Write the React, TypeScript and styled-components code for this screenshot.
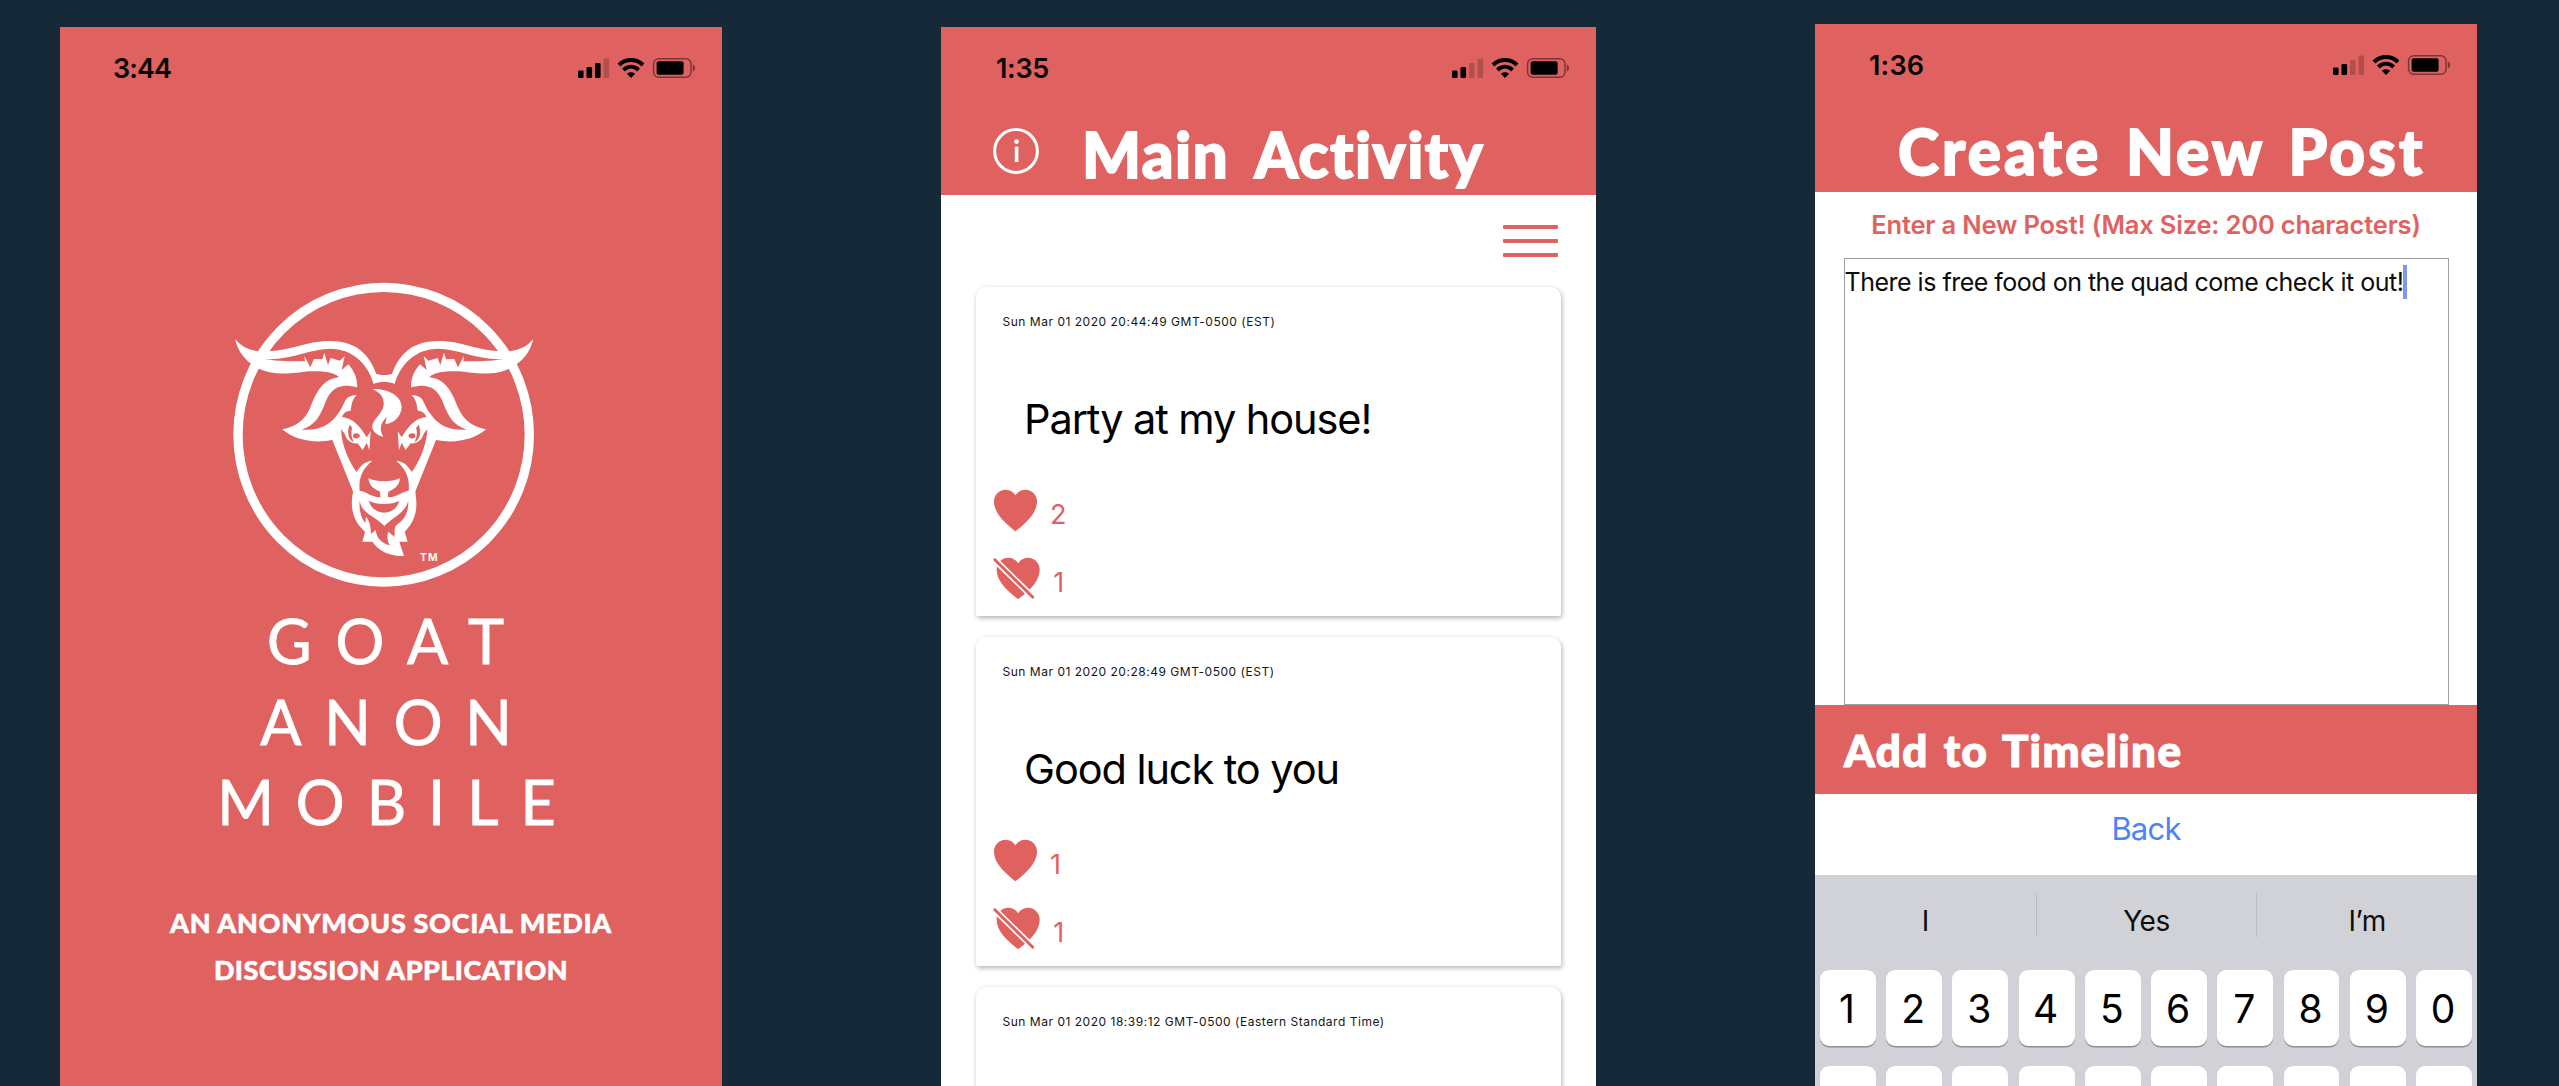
import React from "react";
import styled, { createGlobalStyle } from "styled-components";
import { IoIosHeart, IoIosHeartDislike } from "react-icons/io";

const RED = "#df6260";
const NAVY = "#152939";
const UI = '"Inter", "Liberation Sans", sans-serif';
const DISPLAY = '"Lato", "Open Sans", sans-serif';

const GlobalStyle = createGlobalStyle`
  html, body { margin: 0; padding: 0; background: ${NAVY}; overflow: hidden; }
  * { box-sizing: border-box; }
`;

const Stage = styled.main`
  display: flex;
  align-items: flex-start;
  width: 2559px;
  height: 1086px;
  padding-left: 60px;
  overflow: hidden;
  background: ${NAVY};
  font-family: ${UI};
`;

const Phone = styled.section<{ $width: number; $top: number; $gap?: number; $fill?: string }>`
  flex: none;
  display: flex;
  flex-direction: column;
  width: ${(p) => p.$width}px;
  height: ${(p) => 1086 - p.$top}px;
  margin-top: ${(p) => p.$top}px;
  margin-left: ${(p) => p.$gap ?? 0}px;
  background: ${(p) => p.$fill ?? "#fff"};
  overflow: hidden;
`;

/* ---------- status bar ---------- */

const StatusRow = styled.div<{ $inset: number }>`
  flex: none;
  display: flex;
  align-items: center;
  justify-content: space-between;
  height: 82px;
  padding: 0 26px 0 ${(p) => p.$inset}px;
`;

const Clock = styled.time<{ $tracking: number }>`
  padding-top: 1px;
  font: 600 27px/32px ${UI};
  letter-spacing: ${(p) => p.$tracking}px;
  color: #0a0505;
`;

function StatusBar({ time, bars, inset, tracking = 0 }: { time: string; bars: number; inset: number; tracking?: number }) {
  const heights = [7.5, 11, 15, 19.5];
  return (
    <StatusRow $inset={inset}>
      <Clock $tracking={tracking}>{time}</Clock>
      <svg width="118" height="20" viewBox="0 0 118 20">
        {heights.map((h, i) => (
          <rect key={h} x={i * 8.5} y={20 - h} width="5.6" height={h} rx="1.3" fill="#000" opacity={i < bars ? 1 : 0.2} />
        ))}
        <g fill="none" stroke="#000" strokeWidth="4">
          <path d="M41 7 C48 0.4 58 0.4 65 7" />
          <path d="M45.4 12 C50 7.8 56 7.8 60.6 12" />
        </g>
        <path d="M53 20 L48.9 15.8 C51.2 13.8 54.8 13.8 57.1 15.8 Z" />
        <rect x="75.6" y="0.8" width="37.4" height="18.4" rx="5" fill="none" stroke="#000" strokeOpacity="0.45" strokeWidth="1.5" />
        <rect x="78.6" y="3.2" width="27" height="13.6" rx="2" />
        <path d="M114.8 6.4 C117.8 7.6 117.8 12.4 114.8 13.6 Z" opacity="0.45" />
      </svg>
    </StatusRow>
  );
}

/* ---------- splash ---------- */

const Emblem = styled.svg`
  flex: none;
  width: 350px;
  height: 330px;
  margin: 161px 0 0 150px;
`;

const Wordmark = styled.h1`
  display: flex;
  flex-direction: column;
  align-items: center;
  margin: 1px 0 0;
  padding-left: 13px;
  font: 400 61px/80.5px ${DISPLAY};
  color: #fff;
  -webkit-text-stroke: 0.9px #fff;
`;

const WordLine = styled.span<{ $tracking: number }>`
  letter-spacing: ${(p) => p.$tracking}px;
`;

const Tagline = styled.p`
  display: flex;
  flex-direction: column;
  align-items: center;
  margin: 56px 0 0;
  font: 900 27px/47.7px ${DISPLAY};
  color: #fff;
  -webkit-text-stroke: 0.5px #fff;
`;

const HALF_HEAD =
  "M75 207 C95 232 120 240 147 244 C250 245 280 213 360 213 C445 213 480 260 499 312 C510 315 516 315 523 315 " +
  "L523 336 C510 336 500 338 491 342 C475 285 430 236 360 236 C300 236 240 272 165 267 C205 275 245 273 285 274 " +
  "L283 258 L301 292 L312 267 L337 268 L343 248 L354 285 L362 264 L390 272 L404 258 L395 300 L415 283 " +
  "C430 300 442 320 442 352 C395 340 365 350 347 395 C330 440 315 465 275 479 C335 483 365 460 385 430 " +
  "C410 395 400 378 440 375 C425 390 425 405 422 422 C408 422 398 432 396 441 C425 445 445 460 470 502 " +
  "L482 484 L478 540 L470 518 L458 540 L443 520 C425 522 410 512 403 490 L393 477 C395 530 420 580 440 606 " +
  "C450 590 460 575 487 572 C460 595 445 620 449 662 L430 667 L367 510 C310 522 250 508 217 478 " +
  "C255 470 282 455 300 415 C318 370 335 328 387 322 C375 305 330 302 295 304 C250 312 180 318 140 292 " +
  "C110 275 85 250 75 207 Z";

function HalfHead() {
  return (
    <>
      <path d={HALF_HEAD} fill="#fff" />
      <path d="M419 464 C410 485 414 508 432 517 C424 502 422 486 427 474 Z" fill={RED} />
      <path d="M430 492 C438 488 446 490 450 497 C447 506 436 508 429 502 Z" fill={RED} />
    </>
  );
}

function GoatEmblem() {
  return (
    <Emblem viewBox="0 0 1050 990">
      <ellipse cx="521" cy="494" rx="437" ry="442" fill="none" stroke="#fff" strokeWidth="28" />
      <HalfHead />
      <g transform="translate(1045 0) scale(-1 1)">
        <HalfHead />
      </g>
      <path
        fill="#fff"
        d="M487 357 C530 355 575 375 575 412 C573 445 545 462 527 462 C525 455 530 448 530 442 C515 455 505 475 520 500 C495 495 485 480 487 465 C495 440 525 425 521 395 C518 375 505 365 487 357 Z"
      />
      <path
        fill="#fff"
        d="M430 660 C422 700 420 745 465 785 L457 815 L487 815 C505 842 540 860 582 858 L568 815 L593 815 L584 785 C625 745 622 700 615 660 L597 662 C575 665 565 680 533 682 L512 682 C480 680 470 665 449 662 Z"
      />
      <path
        fill="#fff"
        d="M475 625 C500 637 545 637 570 625 C568 650 550 658 535 665 L533 686 L512 686 L510 665 C495 658 478 650 475 625 Z"
      />
      <path fill={RED} d="M476 692 C500 705 545 705 568 692 C555 740 490 740 476 692 Z" />
      <path
        fill={RED}
        d="M449 692 C455 730 490 735 523 768 C550 740 585 730 595 692 C595 725 588 745 560 765 C550 775 556 785 553 800 L535 785 C530 800 532 815 540 826 C515 820 500 805 497 780 L483 792 C482 770 480 755 468 740 L466 758 C452 745 447 715 449 692 Z"
      />
      <text x="630" y="874" fill="#fff" fontFamily={UI} fontWeight="700" fontSize="31" textLength="53">
        TM
      </text>
    </Emblem>
  );
}

/* ---------- headers ---------- */

const Header = styled.header`
  flex: none;
  display: flex;
  flex-direction: column;
  background: ${RED};
`;

const TitleRow = styled.div<{ $inset: number }>`
  display: flex;
  align-items: center;
  height: 86px;
  padding-left: ${(p) => p.$inset}px;
`;

const ScreenTitle = styled.h2<{ $tracking: number; $words: number }>`
  margin: 0;
  padding-top: 3px;
  font: 900 62px/74px ${DISPLAY};
  font-variant-ligatures: none;
  letter-spacing: ${(p) => p.$tracking}px;
  word-spacing: ${(p) => p.$words}px;
  white-space: nowrap;
  color: #fff;
  -webkit-text-stroke: 1.8px #fff;
`;

const InfoIcon = styled.svg`
  flex: none;
  width: 48px;
  height: 48px;
  margin: 0 42px 0 0;
`;

/* ---------- feed ---------- */

const Toolbar = styled.div`
  flex: none;
  display: flex;
  align-items: center;
  justify-content: flex-end;
  height: 92px;
  padding-right: 38px;
`;

const MenuButton = styled.button`
  display: flex;
  flex-direction: column;
  gap: 10px;
  width: 55px;
  padding: 0;
  border: 0;
  background: none;
`;

const MenuBar = styled.span`
  height: 4.3px;
  border-radius: 1px;
  background: ${RED};
`;

const Feed = styled.div`
  display: flex;
  flex-direction: column;
  gap: 21px;
  padding-left: 34.5px;
`;

const Card = styled.article`
  flex: none;
  width: 585.5px;
  height: 329px;
  padding-top: 25px;
  border-radius: 10px 10px 2px 2px;
  background: #fff;
  box-shadow: 1px 2px 5px rgba(0, 0, 0, 0.3);
`;

const Stamp = styled.div`
  padding-left: 27px;
  font: 400 12px/20px ${UI};
  letter-spacing: 0.52px;
  color: #151515;
`;

const Message = styled.div`
  margin-top: 62px;
  padding-left: 48.5px;
  font: 400 41.5px/50px ${UI};
  letter-spacing: -1.08px;
  color: #000;
`;

const Votes = styled.div`
  display: flex;
  flex-direction: column;
  gap: 15px;
  margin-top: 40px;
`;

const Vote = styled.div<{ $inset: number; $gap: number }>`
  display: flex;
  align-items: center;
  gap: ${(p) => p.$gap}px;
  height: 53px;
  padding-left: ${(p) => p.$inset}px;
  font-size: 53px;
  color: ${RED};
`;

const Count = styled.span`
  padding-top: 9px;
  font: 400 27px/32px ${UI};
`;

function Post({ stamp, message, likes, dislikes }: { stamp: string; message?: string; likes?: number; dislikes?: number }) {
  return (
    <Card>
      <Stamp>{stamp}</Stamp>
      {message && (
        <>
          <Message>{message}</Message>
          <Votes>
            <Vote $inset={13} $gap={8.5}>
              <IoIosHeart />
              <Count>{likes}</Count>
            </Vote>
            <Vote $inset={14.7} $gap={10}>
              <IoIosHeartDislike />
              <Count>{dislikes}</Count>
            </Vote>
          </Votes>
        </>
      )}
    </Card>
  );
}

/* ---------- composer ---------- */

const Prompt = styled.div`
  flex: none;
  text-align: center;
  font: 600 25.5px/66px ${UI};
  letter-spacing: -0.18px;
  color: ${RED};
`;

const Editor = styled.div`
  flex: none;
  display: flex;
  align-items: flex-start;
  width: 605px;
  height: 447px;
  margin-left: 28.5px;
  padding-top: 6px;
  border: 1.5px solid #a0a0a0;
  font: 400 25px/35px ${UI};
  letter-spacing: -0.5px;
  white-space: nowrap;
  color: #0c0c0c;
`;

const Caret = styled.span`
  width: 4px;
  height: 34px;
  background: #7f97ee;
`;

const SubmitBar = styled.div`
  flex: none;
  height: 89px;
  padding: 1px 0 0 29px;
  font: 900 44px/89px ${DISPLAY};
  letter-spacing: 1.35px;
  word-spacing: 3.2px;
  color: #fff;
  background: ${RED};
  -webkit-text-stroke: 1.2px #fff;
`;

const BackLink = styled.div`
  flex: none;
  height: 81px;
  text-align: center;
  font: 400 31px/70px ${UI};
  letter-spacing: -0.8px;
  color: #4a84f5;
`;

const Keyboard = styled.div`
  flex: none;
  display: flex;
  flex-direction: column;
  height: 211px;
  background: #d1d2d8;
`;

const Suggestions = styled.div`
  flex: none;
  display: grid;
  grid-template-columns: repeat(3, 1fr);
  height: 94.5px;
  padding-top: 17.5px;
`;

const Suggestion = styled.div`
  height: 44px;
  padding-top: 6px;
  text-align: center;
  font: 400 28px/44px ${UI};
  letter-spacing: -0.5px;
  color: #0d0d0d;
  & + & {
    border-left: 1.5px solid #b9bbc0;
  }
`;

const Keys = styled.div`
  flex: none;
  display: grid;
  grid-template-columns: repeat(10, 55.8px);
  gap: 20.5px 10.45px;
  padding-left: 5px;
`;

const Key = styled.div`
  height: 76px;
  padding-right: 2px;
  border-radius: 9px;
  text-align: center;
  font: 400 39px/77px ${UI};
  color: #000;
  background: #fff;
  box-shadow: 0 1.5px 0 #8d8f93;
`;

export default function App() {
  return (
    <>
      <GlobalStyle />
      <Stage>
        <Phone $width={662} $top={27} $fill={RED}>
          <StatusBar time="3:44" bars={3} inset={53} tracking={-0.9} />
          <GoatEmblem />
          <Wordmark>
            <WordLine $tracking={24}>GOAT</WordLine>
            <WordLine $tracking={22.8}>ANON</WordLine>
            <WordLine $tracking={22}>MOBILE</WordLine>
          </Wordmark>
          <Tagline>
            <WordLine $tracking={0.68}>AN ANONYMOUS SOCIAL MEDIA</WordLine>
            <WordLine $tracking={0.42}>DISCUSSION APPLICATION</WordLine>
          </Tagline>
        </Phone>

        <Phone $width={655} $top={27} $gap={219}>
          <Header>
            <StatusBar time="1:35" bars={2} inset={55} tracking={-0.3} />
            <TitleRow $inset={51}>
              <InfoIcon viewBox="0 0 48 48">
                <circle cx="24" cy="23" r="21.4" fill="none" stroke="#fff" strokeWidth="3" />
                <circle cx="24.5" cy="13.6" r="2.4" fill="#fff" />
                <rect x="22.8" y="18.6" width="3.6" height="15.4" fill="#fff" />
              </InfoIcon>
              <ScreenTitle $tracking={1.5} $words={11}>Main Activity</ScreenTitle>
            </TitleRow>
          </Header>
          <Toolbar>
            <MenuButton>
              <MenuBar />
              <MenuBar />
              <MenuBar />
            </MenuButton>
          </Toolbar>
          <Feed>
            <Post stamp="Sun Mar 01 2020 20:44:49 GMT-0500 (EST)" message="Party at my house!" likes={2} dislikes={1} />
            <Post stamp="Sun Mar 01 2020 20:28:49 GMT-0500 (EST)" message="Good luck to you" likes={1} dislikes={1} />
            <Post stamp="Sun Mar 01 2020 18:39:12 GMT-0500 (Eastern Standard Time)" />
          </Feed>
        </Phone>

        <Phone $width={662} $top={24} $gap={219}>
          <Header>
            <StatusBar time="1:36" bars={2} inset={54} tracking={0.2} />
            <TitleRow $inset={83}>
              <ScreenTitle $tracking={3.2} $words={6.5}>Create New Post</ScreenTitle>
            </TitleRow>
          </Header>
          <Prompt>Enter a New Post! (Max Size: 200 characters)</Prompt>
          <Editor>
            There is free food on the quad come check it out!
            <Caret />
          </Editor>
          <SubmitBar>Add to Timeline</SubmitBar>
          <BackLink>Back</BackLink>
          <Keyboard>
            <Suggestions>
              <Suggestion>I</Suggestion>
              <Suggestion>Yes</Suggestion>
              <Suggestion>I’m</Suggestion>
            </Suggestions>
            <Keys>
              {["1", "2", "3", "4", "5", "6", "7", "8", "9", "0"].map((digit) => (
                <Key key={digit}>{digit}</Key>
              ))}
              {Array.from({ length: 10 }, (_, i) => (
                <Key key={`lower-${i}`} />
              ))}
            </Keys>
          </Keyboard>
        </Phone>
      </Stage>
    </>
  );
}
